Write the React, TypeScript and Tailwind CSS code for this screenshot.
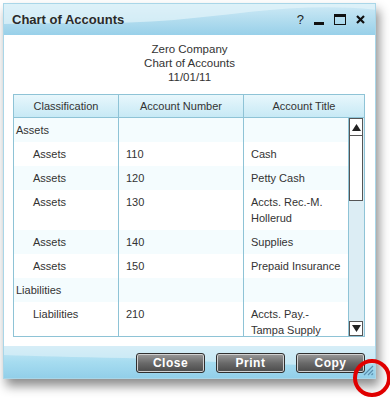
import React from 'react';

type Row = { cls: string; indent: boolean; num: string; title: string[] };

const rows: Row[] = [
  { cls: 'Assets', indent: false, num: '', title: [] },
  { cls: 'Assets', indent: true, num: '110', title: ['Cash'] },
  { cls: 'Assets', indent: true, num: '120', title: ['Petty Cash'] },
  { cls: 'Assets', indent: true, num: '130', title: ['Accts. Rec.-M.', 'Hollerud'] },
  { cls: 'Assets', indent: true, num: '140', title: ['Supplies'] },
  { cls: 'Assets', indent: true, num: '150', title: ['Prepaid Insurance'] },
  { cls: 'Liabilities', indent: false, num: '', title: [] },
  { cls: 'Liabilities', indent: true, num: '210', title: ['Accts. Pay.-', 'Tampa Supply'] },
];

function Btn({ label }: { label: string }) {
  return (
    <button className="w-[69px] h-[20px] rounded-[3px] border border-[#2f2f2f] bg-gradient-to-b from-[#9a9a9a] via-[#6a6a6a] to-[#4a4a4a] shadow-[inset_0_0_0_1px_#d0d0d0] text-white text-[12px] font-bold leading-none tracking-[0.5px]">
      {label}
    </button>
  );
}

export default function App() {
  return (
    <div className="w-[390px] h-[400px] bg-white relative overflow-hidden font-['Liberation_Sans',Arial,sans-serif] text-[#333]">
      <div className="pt-[3px] pl-[3px]">
        <div className="w-[373px] h-[376px] flex flex-col border border-[#a9d6e8] shadow-[3px_7px_10px_rgba(0,0,0,0.45)] bg-white">
          {/* Title bar */}
          <div className="relative h-[31px] flex items-center pl-[8px] pr-[10px] bg-gradient-to-b from-[#cfeaf6] via-[#b3ddef] to-[#98d0e9] overflow-hidden">
            <svg className="absolute inset-0" width="373" height="31" viewBox="0 0 373 31" preserveAspectRatio="none">
              <path d="M0 0 H373 V6 C300 -2 240 10 170 16 C110 21 50 18 0 20 Z" fill="#e3f3fa" opacity="0.7" />
            </svg>
            <span className="relative flex-1 text-[13px] font-bold text-[#2a2a2a]">Chart of Accounts</span>
            <div className="relative flex items-center gap-[10px] text-[#222]">
              <span className="text-[13px] leading-none">?</span>
              <span className="w-[10px] h-[3px] bg-[#111] mt-[8px]" />
              <span className="w-[12px] h-[11px] border-[1.5px] border-t-[3px] border-[#111]" />
              <svg width="9" height="9" viewBox="0 0 9 9">
                <path d="M1 1 L8 8 M8 1 L1 8" stroke="#111" strokeWidth="2.2" />
              </svg>
            </div>
          </div>

          {/* Body */}
          <div className="flex-1 flex flex-col bg-white">
            <div className="pt-[7px] text-center text-[11.5px] leading-[14px]">
              <div>Zero Company</div>
              <div>Chart of Accounts</div>
              <div>11/01/11</div>
            </div>

            <div className="mt-[10px] ml-[9px] w-[352px] h-[243px] border border-[#8ec3d6] flex flex-col text-[11px]">
              <div className="grid grid-cols-[105px_125px_1fr] h-[23px] border-b border-[#8ec3d6] bg-gradient-to-b from-[#e8f7fc] to-[#c7e9f5]">
                <div className="flex items-center justify-center border-r border-[#8ec3d6]">Classification</div>
                <div className="flex items-center justify-center border-r border-[#8ec3d6]">Account Number</div>
                <div className="flex items-center justify-center">Account Title</div>
              </div>
              <div className="flex-1 flex min-h-0">
                <div className="flex-1 overflow-hidden flex flex-col">
                  {rows.map((r, i) => (
                    <div key={i} className={`grid grid-cols-[105px_125px_1fr] shrink-0 ${i % 2 === 0 ? 'bg-[#f4fcfe]' : 'bg-white'}`}>
                      <div className={`border-r border-[#8ec3d6] py-[4px] leading-[16px] ${r.indent ? 'pl-[19px]' : 'pl-[2px]'}`}>{r.cls}</div>
                      <div className="border-r border-[#8ec3d6] py-[4px] pl-[7px] leading-[16px]">{r.num}</div>
                      <div className="py-[4px] pl-[7px] leading-[16px] whitespace-nowrap">
                        {r.title.length ? r.title.map((t) => <div key={t}>{t}</div>) : <div>&nbsp;</div>}
                      </div>
                    </div>
                  ))}
                  <div className="flex-1 grid grid-cols-[105px_125px_1fr]">
                    <div className="border-r border-[#8ec3d6]" />
                    <div className="border-r border-[#8ec3d6]" />
                    <div />
                  </div>
                </div>
                {/* Scrollbar */}
                <div className="w-[16px] flex flex-col border-l border-[#8ec3d6] bg-[#dcedf4] pr-[1px]">
                  <div className="h-[18px] bg-white border border-[#555] flex items-center justify-center">
                    <svg width="9" height="7" viewBox="0 0 9 7"><path d="M4.5 0 L9 7 H0 Z" fill="#222" /></svg>
                  </div>
                  <div className="h-[65px] bg-white border border-t-0 border-[#555]" />
                  <div className="flex-1" />
                  <div className="h-[15px] bg-white border border-[#555] flex items-center justify-center">
                    <svg width="9" height="7" viewBox="0 0 9 7"><path d="M0 0 H9 L4.5 7 Z" fill="#222" /></svg>
                  </div>
                </div>
              </div>
            </div>
          </div>

          {/* Footer */}
          <div className="relative h-[32px] flex items-center justify-end pr-[10px] bg-gradient-to-b from-[#c8e8f5] via-[#a6dcf0] to-[#92cfe9] overflow-hidden">
            <svg className="absolute inset-0" width="373" height="32" viewBox="0 0 373 32" preserveAspectRatio="none">
              <path d="M0 0 H373 V18 C280 22 200 14 120 12 C70 11 30 10 0 9 Z" fill="#e0f2f9" opacity="0.6" />
            </svg>
            <div className="relative flex gap-[11px] pt-[1px]">
              <Btn label="Close" />
              <Btn label="Print" />
              <Btn label="Copy" />
            </div>
            <svg className="absolute right-[1px] bottom-[2px]" width="12" height="12" viewBox="0 0 12 12">
              <path d="M11 2 L2 11 M11 6 L6 11 M11 9.5 L9.5 11" stroke="#5a8fae" strokeWidth="1.2" />
            </svg>
          </div>
        </div>
      </div>

      {/* Red annotation circle */}
      <div className="absolute left-[353px] top-[359px] w-[38px] h-[38px] rounded-full border-[4px] border-[#e00000]" />
    </div>
  );
}
